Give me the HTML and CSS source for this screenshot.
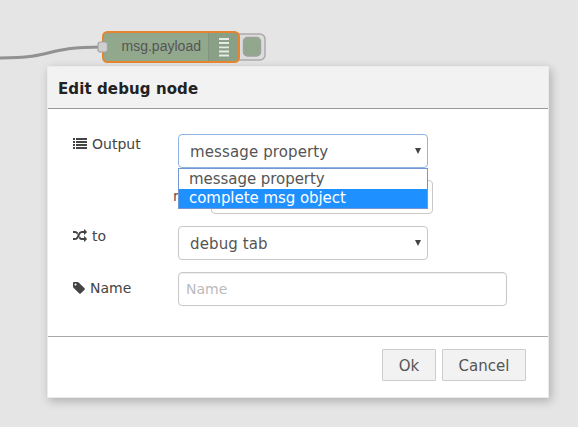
FILE: index.html
```html
<!DOCTYPE html>
<html lang="en">
<head>
<meta charset="utf-8">
<title>Edit debug node</title>
<link rel="stylesheet" href="styles.css">
</head>
<body>
<svg class="workspace" viewBox="0 0 578 67" width="578" height="67">
  <path class="wire" d="M-20 58H0C58 58 42 47 102 47"/>
  <rect class="debug-tab" x="226.5" y="34" width="38.5" height="26" rx="5"/>
  <rect class="debug-button" x="243.5" y="37.5" width="17" height="18.500" rx="4"/>
  <rect class="node" x="103" y="32" width="136" height="30" rx="4.500"/>
  <path class="node-icon" d="M209 33h26a3 3 0 0 1 3 3v22a3 3 0 0 1-3 3h-26z"/>
  <path class="node-edge" d="M208.500 33v28"/>
  <path class="node-lines" d="M219 39h10M219 43h10M219 47.300h10M219 51.500h10M219 55.500h10"/>
  <rect class="node-outline" x="103" y="32" width="136" height="30" rx="4.500"/>
  <rect class="port" x="98" y="42" width="9.500" height="10" rx="2.500"/>
  <text class="node-label" x="121.500" y="51" textLength="79.500">msg.payload</text>
</svg>
<main class="dialog">
  <h1 class="title">Edit debug node</h1>
  <form class="form">
    <div class="row">
      <label class="label"><svg class="icon" viewBox="0 0 14 14"><path d="M0 1h2v2H0zM3 1h11v2H3zM0 4h2v2H0zM3 4h11v2H3zM0 7h2v2H0zM3 7h11v2H3zM0 10h2v2H0zM3 10h11v2H3z"/></svg>Output</label>
      <div class="select open"><span>message property</span><i class="arrow"></i>
        <div class="menu"><div class="option">message property</div><div class="option active">complete msg object</div></div>
      </div>
    </div>
    <div class="row property"><span class="prefix">msg.</span><div class="input"></div></div>
    <div class="row">
      <label class="label"><svg class="icon" viewBox="0 0 1792 1792"><path d="M666 481q-60 92-137 273-22-45-37-72.500t-40.500-63.500-51-56.500-63-35-81.500-14.500h-224q-14 0-23-9t-9-23v-192q0-14 9-23t23-9h224q250 0 410 225zm1126 799q0 14-9 23l-320 320q-9 9-23 9-13 0-22.500-9.500t-9.500-22.500v-192q-32 0-85 .5t-81 1-73-1-71-5-64-10.500-63-18.500-58-28.500-59-40-55-53.500-56-69.500q59-93 136-273 22 45 37 72.500t40.500 63.500 51 56.500 63 35 81.500 14.500h256v-192q0-14 9-23t23-9q12 0 24 10l319 319q9 9 9 23zm0-896q0 14-9 23l-320 320q-9 9-23 9-13 0-22.500-9.500t-9.500-22.500v-192h-256q-48 0-87 15t-69 45-51 61.500-45 77.500q-32 62-78 171-29 66-49.500 111t-54 105-64 100-74 83-90 68.500-106.500 42-128 16.500h-224q-14 0-23-9t-9-23v-192q0-14 9-23t23-9h224q48 0 87-15t69-45 51-61.500 45-77.500q32-62 78-171 29-66 49.500-111t54-105 64-100 74-83 90-68.500 106.500-42 128-16.500h256v-192q0-14 9-23t23-9q12 0 24 10l319 319q9 9 9 23z"/></svg>to</label>
      <div class="select"><span>debug tab</span><i class="arrow"></i></div>
    </div>
    <div class="row">
      <label class="label name-label"><svg class="icon tag" viewBox="128 0 1536 1792"><path d="M576 448q0-53-37.500-90.500t-90.500-37.500-90.500 37.500-37.500 90.500 37.500 90.500 90.500 37.500 90.500-37.500 37.500-90.500zm1067 576q0 53-37 90l-491 492q-39 37-91 37-53 0-90-37l-715-716q-38-37-64.500-101t-26.500-117v-416q0-52 38-90t90-38h416q53 0 117 26.500t102 64.500l715 714q37 39 37 91z"/></svg>Name</label>
      <div class="input name">Name</div>
    </div>
  </form>
  <footer class="footer"><button class="button ok">Ok</button><button class="button cancel">Cancel</button></footer>
</main>
</body>
</html>
```
FILE: styles.css
```css
* { box-sizing: border-box; }
body { margin: 0; height: 427px; overflow: hidden; background: #e5e5e5; color: #444; font: 14px/20px "DejaVu Sans", sans-serif; }
.workspace { display: block; }
.wire { fill: none; stroke: #919191; stroke-width: 3; }
.debug-tab { fill: #dcdcdc; stroke: #aaa; stroke-width: 1.5; }
.debug-button { fill: #91a88d; stroke: #a0a0a0; stroke-width: 1.5; }
.node { fill: #91a88d; }
.node-icon { fill: #8aa086; }
.node-edge { stroke: #82957e; stroke-width: 1; }
.node-lines { stroke: #e6e9e5; stroke-width: 1.8; }
.node-outline { fill: none; stroke: #e58530; stroke-width: 2; }
.port { fill: #cfcfcf; stroke: #a2a2a2; stroke-width: 1.2; }
.node-label { font: 14px "Liberation Sans", sans-serif; fill: #555; }
.dialog { width: 500px; height: 330px; margin-left: 48px; background: #fff; display: flex; flex-direction: column; box-shadow: 0 0 0 1px #ebebeb, 2px 3px 9px 1px rgba(0,0,0,.24); }
.title { margin: 0; height: 42px; padding: 12px 10px 0; background: #f2f2f2; border-bottom: 1px solid #999; color: #222; font-size: 15px; line-height: 20px; font-weight: bold; letter-spacing: .1px; }
.form { height: 227px; padding: 25px 25px 0; display: flex; flex-direction: column; gap: 12px; }
.row { display: flex; height: 34px; }
.label { width: 105px; flex: none; display: flex; align-items: center; height: 20px; gap: 5px; }
.name-label { margin-top: 6px; }
.icon { width: 14px; height: 14px; fill: #444; }
.tag { width: 12px; }
.select { position: relative; width: 250px; height: 34px; border: 1px solid #c8c8c8; border-radius: 4px; padding: 1px 8px 0 11px; display: flex; align-items: center; justify-content: space-between; color: #555; font-size: 15px; letter-spacing: .12px; }
.open { border-color: #8eb5e2; }
.arrow { width: 6px; height: 6px; margin-right: -2px; margin-top: -1px; background: #444; clip-path: polygon(0 0, 100% 0, 50% 100%); }
.menu { position: absolute; z-index: 2; left: -1px; top: 33px; width: 250px; height: 41px; border: 1px solid #7297d2; background: #fff; letter-spacing: -.05px; }
.option { height: 20px; padding-left: 10px; line-height: 21px; }
.active { height: 19px; line-height: 19px; background: #1e90ff; color: #fff; }
.property { padding-left: 100px; }
.prefix { width: 38px; line-height: 32px; color: #555; }
.input { width: 222px; height: 34px; border: 1px solid #c8c8c8; border-radius: 4px; }
.name { width: 329px; padding: 6px 7px; color: #bbb; box-shadow: inset 0 1px 1px rgba(0,0,0,.07); }
.footer { height: 61px; border-top: 1px solid #aaa; display: flex; justify-content: flex-end; gap: 6px; padding: 12px 22px 0; }
.button { height: 32px; padding: 1px 0 0; border: 1px solid #ccc; border-radius: 1px; background: #f2f2f2; color: #555; font: 15px/30px "DejaVu Sans", sans-serif; }
.ok { width: 54px; }
.cancel { width: 84px; }
```
